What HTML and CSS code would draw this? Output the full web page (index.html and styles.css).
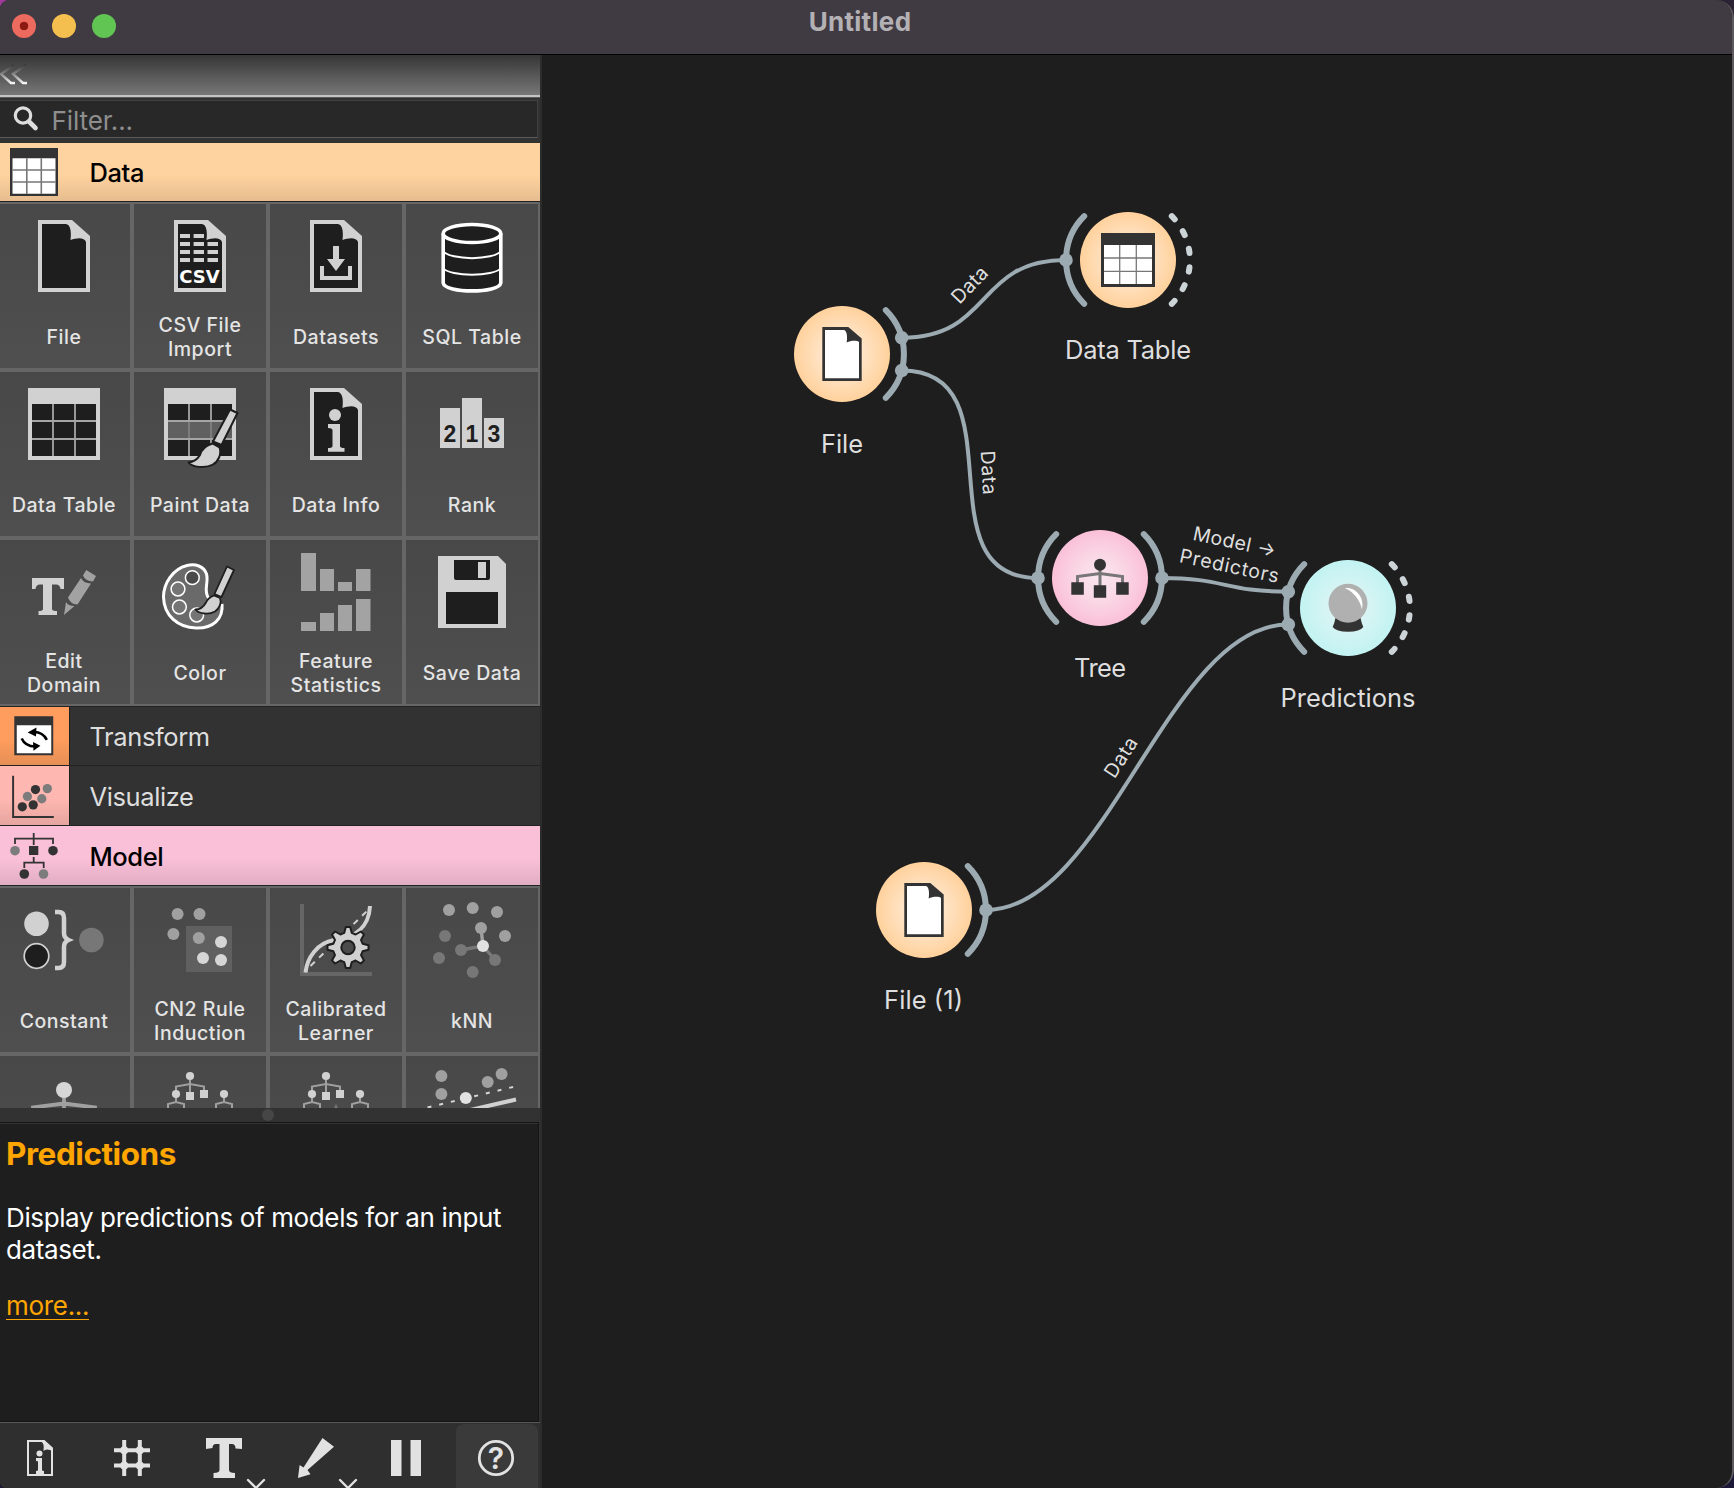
FILE: index.html
```html
<!DOCTYPE html>
<html lang="en">
<head>
<meta charset="utf-8">
<title>Untitled</title>
<link rel="stylesheet" href="styles.css">
</head>
<body>
<svg class="defs" width="0" height="0" aria-hidden="true">
  <defs>
    <radialGradient id="g-data"><stop offset="0" stop-color="#ffefdd"/><stop offset=".4" stop-color="#ffe5c9"/><stop offset="1" stop-color="#ffd19c"/></radialGradient>
    <radialGradient id="g-model"><stop offset="0" stop-color="#fae6ee"/><stop offset=".4" stop-color="#fadbe7"/><stop offset="1" stop-color="#fac0d8"/></radialGradient>
    <radialGradient id="g-eval"><stop offset="0" stop-color="#e2f5f5"/><stop offset=".4" stop-color="#d8f4f4"/><stop offset="1" stop-color="#c2f3f2"/></radialGradient>
    <linearGradient id="g-chev" gradientUnits="userSpaceOnUse" x1="0" y1="9" x2="0" y2="29"><stop offset="0" stop-color="#333"/><stop offset=".5" stop-color="#888"/><stop offset="1" stop-color="#fff"/></linearGradient>
    <symbol id="doc" viewBox="0 0 128 96">
      <path fill="#d1d1d1" d="M38 16H72L90 32V88H38Z"/>
      <path fill="#1e1e1e" d="M42 20H66C70.500 21 71.500 27 70.500 36C77 33.500 84.500 33 86 38V84H42Z"/>
    </symbol>
    <g id="node-file">
      <circle r="48" fill="url(#g-data)"/>
      <path fill="#333" d="M-19.700-27H6.300L19.700-15.500V27H-19.700Z"/>
      <path fill="#fff" d="M-17-24H2C5-23 5.500-18 4.700-11.500C9-14 16-13.500 17-12V24.300H-17Z"/>
    </g>
    <path id="arc-r" class="arc" d="M43.800-43.800A62 62 0 0 1 43.800 43.800"/>
    <path id="arc-l" class="arc" d="M-43.800-43.800A62 62 0 0 0-43.800 43.800"/>
    <g id="forest">
      <path fill="none" stroke="#a0a0a0" stroke-width="2" d="M54 24V36M40 36V30.500L54 28L68 30.500V36M40 41V46M32 54V48L40 46L48 48V54M88 41V46M80 54V48L88 46L96 48V54"/>
      <g fill="#d1d1d1"><circle cx="54" cy="20" r="4.100"/><circle cx="40" cy="38" r="4.100"/><circle cx="88" cy="38" r="4.100"/><path d="M50 36h8v8h-8zM64 34h8v8h-8z"/></g>
    </g>
  </defs>
</svg>
<div class="window">
  <header class="titlebar">
    <div class="lights"><span class="light close"></span><span class="light min"></span><span class="light max"></span></div>
    <h1 class="title">Untitled</h1>
  </header>
  <div class="main">
    <aside class="dock">
      <div class="collapse">
        <svg width="40" height="40" viewBox="0 0 40 40"><path fill="none" stroke="url(#g-chev)" stroke-width="2.500" d="M14 10L1 19L11 28H15M26 10L13 19L23 28H27"/></svg>
      </div>
      <div class="filter">
        <svg width="52" height="36" viewBox="0 100 52 36"><circle cx="23" cy="114.500" r="7.700" fill="none" stroke="#dedede" stroke-width="3.200"/><path stroke="#dedede" stroke-width="4.600" stroke-linecap="round" d="M29 120.500L35.500 127"/></svg>
        <span class="placeholder">Filter...</span>
      </div>
      <div class="toolbox">
        <div class="cat cat-data open">
          <svg class="cat-icon" viewBox="0 0 70 58"><path fill="#333" d="M10 5h48v48H10z"/><path fill="#fff" d="M12.500 15.300h43v35.500h-43z"/><path stroke="#777" stroke-width="1.600" d="M26.800 15.300V51M41.300 15.300V51M12.500 27H55.500M12.500 39H55.500"/></svg>
          <span class="cat-name">Data</span>
        </div>
        <div class="grid">
          <div class="cell"><svg class="icon" viewBox="0 0 128 96"><use href="#doc"/></svg><span class="label">File</span></div>
          <div class="cell"><svg class="icon" viewBox="0 0 128 96"><use href="#doc"/><path fill="#d1d1d1" d="M44 30h10v4H44zM57.600 30H68v4H57.600zM44 38h10v4H44zM57.600 38H68v4H57.600zM71.500 38H82v4H71.500zM44 46h10v4H44zM57.600 46H68v4H57.600zM71.500 46H82v4H71.500zM44 54h10v4H44zM57.600 54H68v4H57.600zM71.500 54H82v4H71.500z"/><text class="csv" x="63.500" y="79">CSV</text></svg><span class="label">CSV File<br>Import</span></div>
          <div class="cell"><svg class="icon" viewBox="0 0 128 96"><use href="#doc"/><path fill="#d1d1d1" d="M61 42h6v13h6L64 67L55 55h6zM48 62h4v10h24V62h4V76H48z"/></svg><span class="label">Datasets</span></div>
          <div class="cell"><svg class="icon" viewBox="0 0 128 96"><path fill="#1e1e1e" stroke="#fff" stroke-width="3.600" d="M35.200 29.500V79C37 89.500 91 89.500 92.800 79V29.500"/><path fill="none" stroke="#fff" stroke-width="2" d="M35 47C42 56.500 86 56.500 93 47M35 64C42 73 86 73 93 64"/><ellipse cx="64" cy="29.500" rx="28.800" ry="9" fill="#1e1e1e" stroke="#fff" stroke-width="3.600"/></svg><span class="label">SQL Table</span></div>

          <div class="cell"><svg class="icon" viewBox="0 0 128 96"><path fill="#d1d1d1" d="M28 16h72v72H28z"/><path fill="#1e1e1e" d="M32 32h64v52H32z"/><path stroke="#a5a5a5" stroke-width="1.800" d="M53 32V84M75 32V84M32 49H96M32 67H96"/></svg><span class="label">Data Table</span></div>
          <div class="cell"><svg class="icon" viewBox="0 0 128 96"><path fill="#d1d1d1" d="M28 16h72v72H28z"/><path fill="#1e1e1e" d="M32 32h64v52H32z"/><path fill="#606060" d="M32 49h64v18H32z"/><path stroke="#a5a5a5" stroke-width="1.800" d="M53 32V49M75 32V49M53 67V84M75 67V84M32 49H96M32 67H96"/><path stroke="#808080" stroke-width="1.800" d="M53 50V66M75 50V66"/><g fill="#d1d1d1" stroke="#1e1e1e" stroke-width="2" stroke-linejoin="round"><path d="M94 37.500L101.500 41L85.500 73L77 69.500Z"/><path d="M76.500 71.500L83.500 75.500C86 82 82 90 77 92.500C69 97 56 95 52.500 90.500C58 90 61 88 64 83C66 76 71 73 76.500 71.500Z"/></g></svg><span class="label">Paint Data</span></div>
          <div class="cell"><svg class="icon" viewBox="0 0 128 96"><use href="#doc"/><circle cx="63" cy="43" r="6" fill="#d1d1d1"/><path fill="#d1d1d1" d="M56 52H68V74Q68 76 72.500 76V79.700H56V76Q60.500 76 60.500 74V58Q60 56 56 56Z"/></svg><span class="label">Data Info</span></div>
          <div class="cell"><svg class="icon" viewBox="0 0 128 96"><path fill="#d1d1d1" d="M32 36h20v40H32zM54 26h20v50H54zM76 46h20v30H76z"/><g class="digits"><text x="42" y="69.500">2</text><text x="64" y="69.500">1</text><text x="86" y="69.500">3</text></g></svg><span class="label">Rank</span></div>

          <div class="cell"><svg class="icon" viewBox="0 0 128 96"><path fill="#d1d1d1" d="M32 38H64V49H60.500Q60 44.500 56 44.500H52V69Q52 71 57 71V75H38.500V71Q43 71 43 69V44.500H40Q36 44.500 35.500 49H32Z"/><path fill="#a2a2a2" d="M64 75L66 62Q68 66 74.500 66ZM68 57.500L81 38Q83 43 91 43.500L77.500 64.500Q70 64 68 57.500ZM86.200 30L96 36L93 41.500Q85 41 83 35.500Z"/></svg><span class="label">Edit<br>Domain</span></div>
          <div class="cell"><svg class="icon" viewBox="0 0 128 96"><path fill="#6a6a6a" stroke="#fff" stroke-width="3" d="M72.500 58C67 50 73 43 70.500 34C68 26 59 23.500 51 25.500C37 29 27.500 43 27.500 57C28 76 42 87.500 60 88C77 88.500 87.500 79 86 64"/><g fill="#757575" stroke="#fff" stroke-width="1.500"><circle cx="56.300" cy="37.700" r="6.900" fill="#4a4a4a"/><circle cx="42" cy="49" r="6.900"/><circle cx="43.400" cy="67" r="6.900"/><circle cx="60.700" cy="75" r="6.900"/></g><g fill="#d1d1d1" stroke="#1e1e1e" stroke-width="1.800" stroke-linejoin="round"><path d="M91 26.500L98 30L85.500 57L78.500 54Z"/><path d="M78 55.500L84 58C86 63 83 69 79 71.500C73 75 63 74 59.500 69.500C65 69.500 67.500 67 70 62.500C71.500 59 74 57 78 55.500Z"/></g></svg><span class="label">Color</span></div>
          <div class="cell"><svg class="icon" viewBox="0 0 128 96"><path fill="#a3a3a3" d="M29 13h15v38H29zM48 29h14v22H48zM66 42h14v9H66zM84 29h14.500v22H84zM29 82h15v9H29zM48 73h14v18H48zM66 65h14v26H66zM84 59h14.500v32H84z"/></svg><span class="label">Feature<br>Statistics</span></div>
          <div class="cell"><svg class="icon" viewBox="0 0 128 96"><path fill="#d1d1d1" d="M30 16H90L98 24V88H30Z"/><path fill="#1e1e1e" d="M46 20H82V38Q82 40 80 40H48Q46 40 46 38ZM38 52H90V84H38Z"/><path fill="#d1d1d1" d="M70 22h8v16h-8z"/></svg><span class="label">Save Data</span></div>
        </div>
        <div class="cat cat-transform">
          <svg class="cat-icon" viewBox="0 0 70 58"><path fill="#333" d="M14.500 9H54V48.500H14.500z"/><path fill="#fff" d="M17 18H52V46.500H17z"/><path fill="none" stroke="#000" stroke-width="2.600" d="M47.500 33C44.500 27 40.500 25 34.500 25M22 31.500C24.500 37 28.500 39.500 35.500 39.700"/><path d="M28 25.500L37 20.500L36.500 29.500ZM41 39L33.500 35L34 44Z"/></svg>
          <span class="cat-name">Transform</span>
        </div>
        <div class="cat cat-visualize">
          <svg class="cat-icon" viewBox="0 0 70 58"><path fill="none" stroke="#333" stroke-width="2" d="M13.300 9V50.700H54.600"/><g fill="#333"><circle cx="22.600" cy="40.500" r="4.700"/><circle cx="33.700" cy="38.500" r="4.700"/><circle cx="36" cy="23" r="4.700"/></g><g fill="#7c7c7c"><circle cx="27.800" cy="30" r="4.700"/><circle cx="42.400" cy="32.300" r="4.700"/><circle cx="48" cy="22" r="4.700"/></g></svg>
          <span class="cat-name">Visualize</span>
        </div>
        <div class="cat cat-model open">
          <svg class="cat-icon" viewBox="0 0 70 58"><path fill="none" stroke="#333" stroke-width="1.800" d="M33.700 7V19M15 18V12.700H53V18M33.700 31V36.700M24.300 42V36.700H43.700V42"/><path fill="#333" d="M29 20h9.300v9H29z"/><g fill="#333"><circle cx="53" cy="24.700" r="4.800"/><circle cx="24.300" cy="48" r="4.800"/></g><g fill="#7c7c7c"><circle cx="15" cy="24.700" r="4.800"/><circle cx="43.500" cy="48" r="4.800"/></g></svg>
          <span class="cat-name">Model</span>
        </div>
        <div class="grid">
          <div class="cell"><svg class="icon" viewBox="0 2 128 96"><circle cx="36.500" cy="37.700" r="12.300" fill="#d1d1d1"/><circle cx="36.500" cy="70" r="12.300" fill="#1e1e1e" stroke="#d1d1d1" stroke-width="1.700"/><path fill="none" stroke="#d1d1d1" stroke-width="4.500" d="M55 26H58.500Q64 26 64 32V47Q64 52 68.500 54Q64 56 64 61V76Q64 82 58.500 82H55"/><circle cx="91.400" cy="54" r="12.300" fill="#777"/></svg><span class="label">Constant</span></div>
          <div class="cell"><svg class="icon" viewBox="0 2 128 96"><path fill="#606060" d="M50 40h46v46H50z"/><g fill="#a0a0a0"><circle cx="41.600" cy="28" r="6"/><circle cx="63.500" cy="28" r="6"/><circle cx="37.400" cy="48" r="6"/><circle cx="62.800" cy="52" r="6"/></g><g fill="#d6d6d6"><circle cx="85" cy="56" r="6"/><circle cx="67" cy="72" r="6"/><circle cx="85" cy="74" r="6"/></g></svg><span class="label">CN2 Rule<br>Induction</span></div>
          <div class="cell"><svg class="icon" viewBox="0 2 128 96"><path fill="#666" d="M28 18h4v68h68v4H28z"/><path fill="none" stroke="#d1d1d1" stroke-width="2" stroke-dasharray="6 6" d="M38.500 80L95 25"/><path fill="none" stroke="#d1d1d1" stroke-width="4" d="M33.500 86.500C35 72 45 57 62 54C82 52 97 42 98 20"/><path transform="translate(76 61.500)" fill="#d1d1d1" stroke="#1e1e1e" stroke-width="2" stroke-linejoin="round" d="M-3.800-14.600L-2.200-20.500 2.200-20.500 3.800-14.600 7.600-13 12.900-16 16-12.900 13-7.600 14.600-3.800 20.500-2.200 20.500 2.200 14.600 3.800 13 7.600 16 12.900 12.900 16 7.600 13 3.800 14.600 2.200 20.500-2.200 20.500-3.800 14.600-7.600 13-12.900 16-16 12.900-13 7.600-14.600 3.800-20.500 2.200-20.500-2.200-14.600-3.800-13-7.600-16-12.900-12.900-16-7.600-13Z"/><circle cx="76" cy="61.500" r="6.700" fill="#4b4b4b" stroke="#1e1e1e" stroke-width="2"/></svg><span class="label">Calibrated<br>Learner</span></div>
          <div class="cell"><svg class="icon" viewBox="0 2 128 96"><g stroke-width="3.400"><path stroke="#777" d="M75 60L53 64M75 60L87 74"/><path stroke="#a0a0a0" d="M75 60L73 42"/></g><g fill="#a0a0a0"><circle cx="41" cy="24" r="6"/><circle cx="64.700" cy="22" r="6"/><circle cx="89" cy="26" r="6"/><circle cx="73" cy="42" r="6"/><circle cx="97" cy="50" r="6"/></g><g fill="#777"><circle cx="37" cy="50" r="6"/><circle cx="53" cy="64" r="6"/><circle cx="31" cy="72" r="6"/><circle cx="87" cy="74" r="6"/><circle cx="64.700" cy="86" r="6"/></g><circle cx="75" cy="60" r="6" fill="#e2e2e2"/></svg><span class="label">kNN</span></div>
          <div class="cell"><svg class="icon" viewBox="0 0 128 96"><path fill="none" stroke="#a0a0a0" stroke-width="3.800" d="M64 38V60M33 60V51.500L64 47.500L95 51.500V60"/><circle cx="64" cy="34" r="8" fill="#d6d6d6"/></svg></div>
          <div class="cell"><svg class="icon" viewBox="0 0 128 96"><use href="#forest"/></svg></div>
          <div class="cell"><svg class="icon" viewBox="0 0 128 96"><use href="#forest"/><path fill="#777" d="M64 47.500L67 55H61z"/></svg></div>
          <div class="cell"><svg class="icon" viewBox="0 0 128 96"><g fill="#a0a0a0"><circle cx="33.400" cy="20" r="6"/><circle cx="33.400" cy="38" r="6"/><circle cx="79.700" cy="26" r="6"/><circle cx="93.600" cy="18" r="6"/></g><path stroke="#d6d6d6" stroke-width="2" stroke-dasharray="4 8" d="M19.500 51.500L107 30.500"/><path stroke="#d1d1d1" stroke-width="4" d="M60 54.500L108 43.500"/><circle cx="57.800" cy="42" r="6" fill="#e2e2e2"/></svg></div>
        </div>
      </div>
      <div class="splitter"><span class="grip"></span></div>
      <section class="help">
        <h2 class="help-title">Predictions</h2>
        <p class="help-text">Display predictions of models for an input dataset.</p>
        <a class="more">more...</a>
      </section>
      <nav class="toolbar">
        <svg width="86" height="65" viewBox="0 1423 86 65"><path fill="none" stroke="#e2e2e2" stroke-width="2" d="M28 1441H44L52 1448.500V1475H28Z"/><path fill="#e2e2e2" d="M41.500 1440H44L53 1448V1451Q46 1448 43.500 1451Q44.500 1443 41.500 1442ZM36 1458H42V1470Q42 1471 44 1471V1474H36V1471Q38 1471 38 1470V1461.500Q38 1461 36 1461Z"/><circle cx="39.500" cy="1453.500" r="3" fill="#e2e2e2"/></svg>
        <svg width="92" height="65" viewBox="86 1423 92 65"><path fill="none" stroke="#e2e2e2" stroke-width="4" d="M124.200 1440V1476M139.800 1440V1476M114 1450.300H150M114 1465.600H150"/><g fill="#e2e2e2"><circle cx="124.200" cy="1450.300" r="4"/><circle cx="139.800" cy="1450.300" r="4"/><circle cx="124.200" cy="1465.600" r="4"/><circle cx="139.800" cy="1465.600" r="4"/></g></svg>
        <svg width="92" height="65" viewBox="178 1423 92 65"><path fill="#e2e2e2" d="M206 1438H242V1449L235.500 1448.500Q235.500 1444 232 1444H229V1470Q229 1473 235 1473V1478H213.500V1473Q219.500 1473 219.500 1470V1444H216Q212.500 1444 212.500 1448L206 1449Z"/><path class="drop" d="M248 1480L256 1488L264 1480"/></svg>
        <svg width="92" height="65" viewBox="270 1423 92 65"><path fill="#e2e2e2" d="M322.500 1438L334 1446.700L307.500 1470L310.500 1474.300L298 1478L299.600 1465L303.500 1467.500Z"/><path class="drop" d="M340 1480L348 1488L356 1480"/></svg>
        <svg width="94" height="65" viewBox="362 1423 94 65"><path fill="#e2e2e2" d="M391 1440h10.500v36H391zM410.500 1440H421v36H410.500z"/></svg>
        <span class="tool-on"><svg width="82" height="64" viewBox="456 1424 82 64"><circle cx="496" cy="1458" r="16.700" fill="none" stroke="#e2e2e2" stroke-width="2.800"/><text class="qmark" x="496" y="1469">?</text></svg></span>
      </nav>
    </aside>
    <main class="canvas">
      <svg width="1190" height="1433" viewBox="542 55 1190 1433">
        <g class="links">
          <path d="M902 337.700C993 337.700 975 260 1066 260"/>
          <path d="M902 370.500C1022 370.500 918 578 1038 578"/>
          <path d="M1162 578C1225 578 1225 591.700 1288 591.700"/>
          <path d="M986 910C1106 910 1168 624.500 1288 624.500"/>
        </g>
        <g class="link-labels">
          <text transform="translate(974.500 289.500) rotate(-46)" textLength="43">Data</text>
          <text transform="translate(982 473) rotate(86.800)" textLength="44">Data</text>
          <text transform="translate(1126.500 761) rotate(-57)" textLength="44">Data</text>
          <text transform="translate(1233 548.500) rotate(12)" textLength="84">Model →</text>
          <text transform="translate(1228 572.500) rotate(12)" textLength="101">Predictors</text>
        </g>
        <g transform="translate(842 354)"><use href="#node-file"/><use href="#arc-r"/><circle class="dot" cx="59.700" cy="-16.300" r="6.800"/><circle class="dot" cx="59.700" cy="16.500" r="6.800"/><text class="node-label" y="98.500" textLength="42">File</text></g>
        <g transform="translate(1128 260)">
          <circle r="48" fill="url(#g-data)"/>
          <path fill="#333" d="M-27-27H27V27H-27Z"/><path fill="#fff" d="M-24-15H24V24H-24Z"/><path stroke="#777" stroke-width="1.300" d="M-8.300-15V24M8.300-15V24M-24-2H24M-24 11.300H24"/>
          <use href="#arc-l"/><circle class="dot" cx="-62" r="6.800"/><path class="arc dashed" d="M43.800-43.800A62 62 0 0 1 43.800 43.800"/>
          <text class="node-label" y="98.500" textLength="126">Data Table</text>
        </g>
        <g transform="translate(1100 578)">
          <circle r="48" fill="url(#g-model)"/>
          <path fill="none" stroke="#777" stroke-width="3" d="M0-10V8M-22.500 5V-1.500L0-4.500L22.500-1.500V5"/>
          <circle cy="-13.300" r="6" fill="#333"/><path fill="#333" d="M-28.700 4.300h12.500v12.500h-12.500zM-6.200 7.300H6.200V19.700H-6.200zM16.200 4.300h12.500v12.500H16.200z"/>
          <use href="#arc-l"/><use href="#arc-r"/><circle class="dot" cx="-62" r="6.800"/><circle class="dot" cx="62" r="6.800"/>
          <text class="node-label" y="98.500" textLength="52">Tree</text>
        </g>
        <g transform="translate(1348 608)">
          <circle r="48" fill="url(#g-eval)"/>
          <path fill="#333" d="M-12.500 10H12.500Q13.500 15 15.300 19Q12 23.700 0 23.700T-15.300 19Q-13.500 15-12.500 10Z"/>
          <circle cy="-4.700" r="19.500" fill="#b0b0b0"/>
          <path fill="#fff" d="M-3-19.800C8-21 17-10 14 1.500C12-8 6-16-3-19.800Z"/>
          <use href="#arc-l"/><circle class="dot" cx="-59.700" cy="-16.300" r="6.800"/><circle class="dot" cx="-59.700" cy="16.500" r="6.800"/><path class="arc dashed" d="M43.800-43.800A62 62 0 0 1 43.800 43.800"/>
          <text class="node-label" y="98.500" textLength="135">Predictions</text>
        </g>
        <g transform="translate(924 910)"><use href="#node-file"/><use href="#arc-r"/><circle class="dot" cx="62" r="6.800"/><text class="node-label" x="-.5" y="98.500" textLength="79">File (1)</text></g>
      </svg>
    </main>
  </div>
</div>
</body>
</html>
```
FILE: styles.css
```css
* { box-sizing: border-box; margin: 0; padding: 0; }
body {
  width: 1734px; height: 1488px; overflow: hidden;
  background: linear-gradient(90deg, #a13a9c 0 20px, #2b2233 40px) no-repeat 0 0 / 100% 700px, #1c1838;
  font-family: Inter, "Liberation Sans", sans-serif;
  color: #dedede;
}
svg { display: block; }
.defs { position: absolute; }
.window {
  display: flex; flex-direction: column;
  width: 1734px; height: 1488px; overflow: hidden;
  border-right: 2px solid #5c5a5e;
  border-radius: 9px 18px 18px 6px;
  background: #1e1e1e;
}
.titlebar {
  display: grid; grid-template-columns: 200px 1fr 212px;
  height: 55px; flex: none;
  background: #403a42; border-bottom: 1px solid #000;
}
.lights { display: flex; gap: 16px; padding: 14px 0 0 12px; }
.light { width: 24px; height: 24px; border-radius: 50%; }
.close { background: radial-gradient(circle, #8c1a10 0 4px, #ed6a5e 4.6px); }
.min { background: #f5bf4f; }
.max { background: #61c554; }
.title {
  padding-top: 6px; text-align: center;
  font-size: 26px; line-height: 32px; font-weight: 700; letter-spacing: .3px; color: #b4b1b5;
}
.main { display: flex; flex: 1; min-height: 0; }
.dock {
  display: flex; flex-direction: column;
  width: 542px; flex: none; background: #323232; border-right: 2px solid #2c2c2c;
}
.collapse {
  height: 43px; flex: none; width: 540px;
  background: linear-gradient(#363636, #777) no-repeat 0 0 / 100% 40px, linear-gradient(#c4c4c4 0 2px, #5a5a5a 2px) no-repeat 0 40px / 100% 3px;
}
.filter {
  display: flex; height: 38px; flex: none; margin: 2px 2px 5px 0;
  background: #282828; border: solid #414141; border-width: 1px 1px 1px 0; border-bottom-color: #5a5a5a;
}
.placeholder { margin-left: -.5px; font-size: 26px; line-height: 39px; letter-spacing: -.1px; color: #8e8e8e; }
.toolbox { height: 965px; flex: none; overflow: hidden; }
.cat {
  display: flex; height: 59px; border-bottom: 1px solid #222;
  color: #dedede; background: #323232;
}
.cat-icon { width: 70px; height: 58px; flex: none; border-right: 1px solid #1e1e1e; overflow: visible; }
.cat-name { padding-left: 19.5px; font-size: 25.5px; line-height: 60px; letter-spacing: -.4px; }
.open { color: #000; font-weight: 500; }
.open .cat-icon { border-right: 0; }
.cat-data { background: linear-gradient(#ffd39f 55%, #e6bd8f); }
.cat-transform { height: 60px; border-top: 1px solid #222; }
.cat-transform .cat-icon { background: linear-gradient(#ff9d5e 55%, #e68f55); }
.cat-visualize { height: 60px; }
.cat-visualize .cat-icon { height: 59px; background: linear-gradient(#ffb7b1 55%, #e6a59f); }
.cat-visualize .cat-name, .cat-model .cat-name { line-height: 62px; }
.cat-model { height: 60px; background: linear-gradient(#fac0d8 55%, #e1adc3); }
.grid { display: grid; grid-template-columns: repeat(4, 136px); grid-auto-rows: 168px; margin-left: -4px; }
.cell {
  display: flex; flex-direction: column; align-items: center;
  border: 2px solid #666; background: linear-gradient(#484848, #4f4f4f);
}
.icon { width: 128px; height: 96px; flex: none; overflow: visible; }
.label {
  display: flex; align-items: center; height: 68px; margin-top: 3px; flex: none;
  text-align: center; font-size: 19.5px; line-height: 24px; font-weight: 500; letter-spacing: .52px; color: #e4e4e4;
}
.csv { font: bold 18px "DejaVu Sans", sans-serif; fill: #fff; text-anchor: middle; }
.digits { font: bold 23px "Liberation Sans", sans-serif; fill: #1e1e1e; text-anchor: middle; }
.splitter { display: flex; justify-content: center; align-items: center; height: 14px; flex: none; }
.grip { width: 12px; height: 12px; border-radius: 50%; background: #464646; margin-right: 4px; }
.help {
  flex: 1; width: 539px; padding: 10px 6px 0; min-height: 0;
  background: #1e1e1e; border: solid #141414; border-width: 1px 1px 1px 0; box-shadow: inset 0 1px #333;
}
.help-title { font-size: 31.5px; line-height: 41px; font-weight: 700; letter-spacing: -.45px; color: #ffa500; }
.help-text { margin-top: 28px; font-size: 26px; line-height: 32px; letter-spacing: -.38px; color: #fff; }
.more {
  display: inline-block; margin-top: 26px; border-bottom: 1px solid #ffa500;
  font-size: 26px; line-height: 27px; letter-spacing: -.3px; color: #ffa500;
}
.toolbar {
  display: flex; height: 66px; flex: none;
  background: #2f2f2f; border-top: 1px solid #585858;
}
.tool-on { margin-top: 1px; width: 82px; background: #3a3a3a; border-radius: 8px 8px 0 0; }
.drop { fill: none; stroke: #e2e2e2; stroke-width: 2.4; stroke-linecap: round; }
.qmark { font: 600 30px Inter, sans-serif; fill: #e2e2e2; text-anchor: middle; }
.canvas { flex: 1; min-width: 0; }
.links path { fill: none; stroke: #9caab2; stroke-width: 4; }
.arc { fill: none; stroke: #9caab2; stroke-width: 6; stroke-linecap: round; }
.dashed { stroke: #ccd4d8; stroke-dasharray: 4.4 14.2; }
.dot { fill: #9caab2; }
.link-labels text { font-size: 19.5px; fill: #dedede; text-anchor: middle; }
.node-label { font-size: 25.5px; fill: #dedede; text-anchor: middle; }
```
